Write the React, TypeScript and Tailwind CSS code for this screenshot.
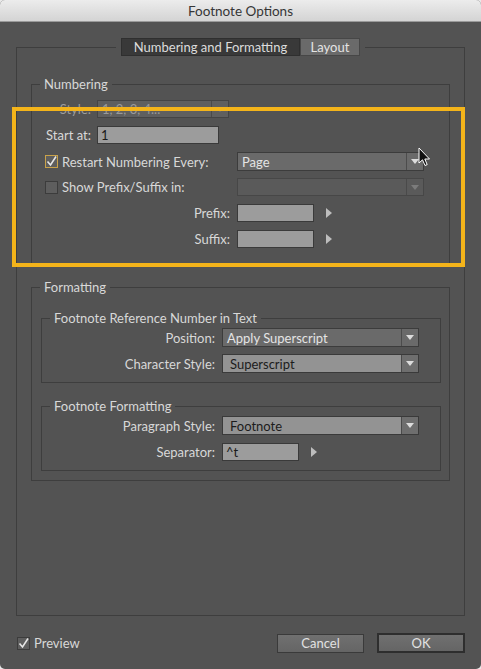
import React from "react";

function RightArrow() {
  return (
    <svg width="6" height="10" viewBox="0 0 6 10" className="block">
      <path d="M0 0 L6 5 L0 10 Z" fill="#bdbdbd" />
    </svg>
  );
}

function DownArrow({ color = "#d6d6d6" }: { color?: string }) {
  return (
    <svg width="8" height="5" viewBox="0 0 8 5" className="block">
      <path d="M0 0 L8 0 L4 5 Z" fill={color} />
    </svg>
  );
}

function Dropdown({
  w,
  value,
  variant,
  h = "h-[19px]",
  pad = "px-[4px]",
}: {
  w: string;
  value: string;
  variant: "dark" | "light" | "disabled" | "dim";
  h?: string;
  pad?: string;
}) {
  const box =
    variant === "light"
      ? "bg-[#939393] border-[#3a3a3a] text-[#1c1c1c]"
      : variant === "dark"
      ? "bg-[#6a6a6a] border-[#3c3c3c] text-[#e4e4e4]"
      : variant === "dim"
      ? "bg-[#5f5f5f] border-[#444444] text-[#9a9a9a]"
      : "bg-[#5a5a5a] border-[#474747] text-[#8a8a8a]";
  const arrowCell =
    variant === "light"
      ? "bg-[#6e6e6e] border-[#4a4a4a]"
      : variant === "dark"
      ? "border-[#4c4c4c]"
      : "border-[#4a4a4a]";
  const arrowColor =
    variant === "disabled" || variant === "dim" ? "#7c7c7c" : "#dcdcdc";
  return (
    <div className={`flex ${h} ${w} border ${box}`}>
      <div className={`flex flex-1 items-center overflow-hidden whitespace-nowrap ${pad}`}>
        {value}
      </div>
      <div className={`flex w-[17px] items-center justify-center border-l ${arrowCell}`}>
        <DownArrow color={arrowColor} />
      </div>
    </div>
  );
}

function TextInput({ w, value = "" }: { w: string; value?: string }) {
  return (
    <div
      className={`flex h-[18px] ${w} items-center border border-[#3a3a3a] bg-[#9c9c9c] px-[3px] text-[#1a1a1a]`}
    >
      {value}
    </div>
  );
}

function Checkbox({ checked, focus }: { checked: boolean; focus?: boolean }) {
  return (
    <div
      className={`flex h-[13px] w-[13px] items-center justify-center border ${
        focus ? "border-[#c9a24a]" : "border-[#3c3c3c]"
      } bg-[#5e5e5e]`}
    >
      {checked && (
        <svg width="11" height="11" viewBox="0 0 11 11" className="block">
          <path d="M1.5 5.5 L4.5 9 L10 0.5" stroke="#e6e6e6" strokeWidth="1.6" fill="none" />
        </svg>
      )}
    </div>
  );
}

export default function App() {
  return (
    <div className="h-[669px] w-[481px] bg-[#e9e9e9] font-['Lato',sans-serif] text-[13px] leading-[16px]">
      <div className="relative flex h-[669px] w-[481px] flex-col overflow-hidden rounded-[5px] bg-[#535353] text-[#d8d8d8]">
        {/* Title bar */}
        <div className="flex h-[22px] items-center justify-center border-b border-[#9a9a9a] bg-gradient-to-b from-[#ececec] to-[#d4d4d4] text-[13.5px] text-[#363636]">
          Footnote Options
        </div>

        {/* Tab panel */}
        <fieldset className="ml-[16px] mt-[16px] w-[449px] border border-[#3e3e3e] pb-[134px] pt-[20px]">
          <legend className="mx-auto flex px-[5px]">
            <div className="flex h-[18px] w-[179px] items-center justify-center border border-[#2f2f2f] bg-[#393939] text-[#dcdcdc]">
              Numbering and Formatting
            </div>
            <div className="flex h-[18px] w-[60px] items-center justify-center border border-[#474747] bg-[#6a6a6a] text-[#e4e4e4]">
              Layout
            </div>
          </legend>

          {/* Numbering */}
          <fieldset className="ml-[14px] w-[419px] border border-[#3e3e3e]">
            <legend className="ml-[8px] px-[4px] text-[#d8d8d8]">Numbering</legend>
            <div className="flex flex-col pb-[16px] pl-[13px] pt-[8px]">
              <div className="flex h-[18px] items-center">
                <span className="w-[46px] text-right text-[#9d9d9d]">Style:</span>
                <div className="ml-[6px]">
                  <Dropdown w="w-[132px]" h="h-[18px]" value="1, 2, 3, 4..." variant="dim" />
                </div>
              </div>
              <div className="mt-[8px] flex h-[18px] items-center">
                <span className="w-[46px] text-right">Start at:</span>
                <div className="ml-[6px]">
                  <TextInput w="w-[122px]" value="1" />
                </div>
              </div>
              <div className="mt-[8px] flex h-[19px] items-center">
                <Checkbox checked focus />
                <span className="ml-[4px] w-[175px]">Restart Numbering Every:</span>
                <Dropdown w="w-[187px]" value="Page" variant="dark" />
              </div>
              <div className="mt-[7px] flex h-[18px] items-center">
                <Checkbox checked={false} />
                <span className="ml-[4px] w-[175px]">Show Prefix/Suffix in:</span>
                <Dropdown w="w-[187px]" h="h-[18px]" value="" variant="disabled" />
              </div>
              <div className="mt-[8px] flex h-[18px] items-center">
                <span className="w-[185px] text-right">Prefix:</span>
                <div className="ml-[7px]">
                  <TextInput w="w-[77px]" />
                </div>
                <div className="ml-[12px]">
                  <RightArrow />
                </div>
              </div>
              <div className="mt-[8px] flex h-[18px] items-center">
                <span className="w-[185px] text-right">Suffix:</span>
                <div className="ml-[7px]">
                  <TextInput w="w-[77px]" />
                </div>
                <div className="ml-[12px]">
                  <RightArrow />
                </div>
              </div>
            </div>
          </fieldset>

          {/* Formatting */}
          <fieldset className="ml-[14px] mt-[14px] w-[419px] border border-[#3e3e3e] pb-[9px] pt-[15px]">
            <legend className="ml-[8px] px-[4px] text-[#d8d8d8]">Formatting</legend>

            <fieldset className="ml-[9px] w-[400px] border border-[#3e3e3e]">
              <legend className="ml-[8px] px-[4px] text-[#d8d8d8]">
                Footnote Reference Number in Text
              </legend>
              <div className="flex flex-col pb-[9px] pt-[2px]">
                <div className="flex h-[19px] items-center">
                  <span className="w-[173px] text-right">Position:</span>
                  <div className="ml-[7px]">
                    <Dropdown w="w-[197px]" value="Apply Superscript" variant="dark" />
                  </div>
                </div>
                <div className="mt-[7px] flex h-[19px] items-center">
                  <span className="w-[173px] text-right">Character Style:</span>
                  <div className="ml-[7px]">
                    <Dropdown w="w-[197px]" value="Superscript" variant="light" pad="pl-[7px] pr-[4px]" />
                  </div>
                </div>
              </div>
            </fieldset>

            <fieldset className="ml-[9px] mt-[15px] w-[400px] border border-[#3e3e3e]">
              <legend className="ml-[8px] px-[4px] text-[#d8d8d8]">Footnote Formatting</legend>
              <div className="flex flex-col pb-[9px] pt-[2px]">
                <div className="flex h-[19px] items-center">
                  <span className="w-[173px] text-right">Paragraph Style:</span>
                  <div className="ml-[7px]">
                    <Dropdown w="w-[197px]" value="Footnote" variant="light" pad="pl-[7px] pr-[4px]" />
                  </div>
                </div>
                <div className="mt-[7px] flex h-[19px] items-center">
                  <span className="w-[173px] text-right">Separator:</span>
                  <div className="ml-[7px]">
                    <TextInput w="w-[77px]" value="^t" />
                  </div>
                  <div className="ml-[12px]">
                    <RightArrow />
                  </div>
                </div>
              </div>
            </fieldset>
          </fieldset>
        </fieldset>

        {/* Bottom bar */}
        <div className="ml-[17px] mr-[16px] mt-[17px] flex h-[20px] items-center">
          <Checkbox checked />
          <span className="ml-[4px]">Preview</span>
          <div className="flex-1" />
          <button className="flex h-[19px] w-[87px] items-center justify-center border border-[#3a3a3a] bg-gradient-to-b from-[#707070] to-[#656565] text-[#e2e2e2]">
            Cancel
          </button>
          <button className="ml-[13px] flex h-[20px] w-[88px] items-center justify-center border-2 border-[#2e2e2e] bg-gradient-to-b from-[#707070] to-[#656565] text-[#e2e2e2]">
            OK
          </button>
        </div>

        {/* Yellow highlight annotation */}
        <div className="pointer-events-none absolute left-[12px] top-[107px] h-[160px] w-[453px] border-[4px] border-[#f4b41a]" />

        {/* Mouse cursor */}
        <svg
          className="pointer-events-none absolute left-[418px] top-[147px]"
          width="14"
          height="21"
          viewBox="0 0 14 21"
        >
          <path
            d="M1 1 L1 16 L4.5 12.8 L7 18.5 L9.2 17.6 L6.8 12 L11.5 12 Z"
            fill="#111"
            stroke="#fff"
            strokeWidth="1"
            strokeLinejoin="round"
          />
        </svg>
      </div>
    </div>
  );
}
